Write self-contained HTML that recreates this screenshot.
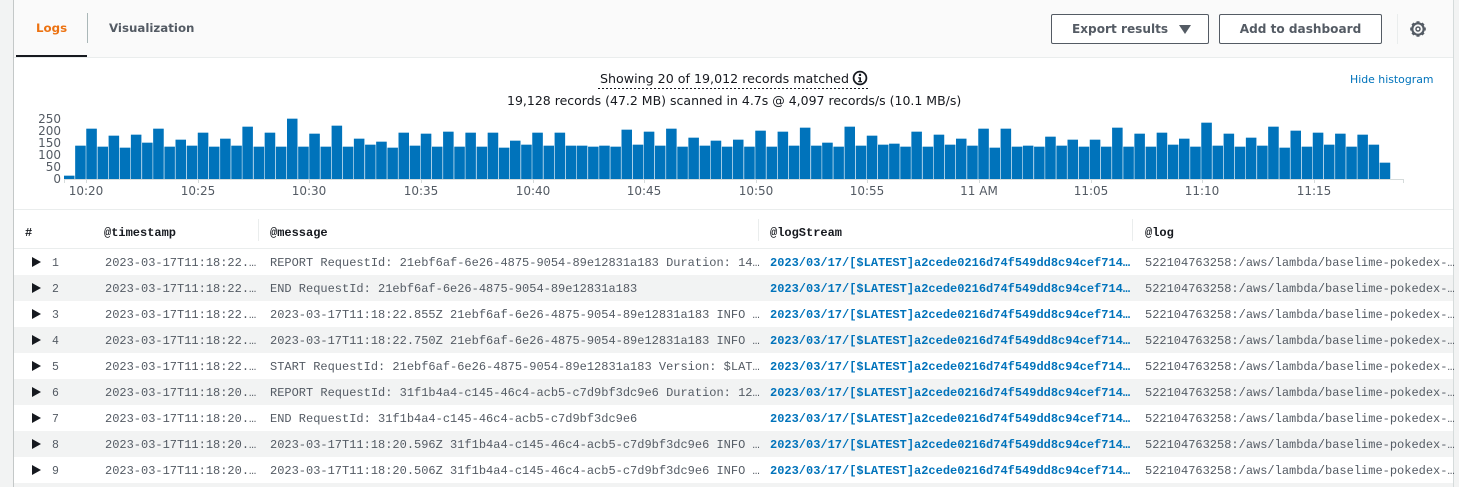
<!DOCTYPE html>
<html><head><meta charset="utf-8"><style>
html,body{margin:0;padding:0;width:1459px;height:487px;overflow:hidden;background:#fff}
body{position:relative;font-family:"DejaVu Sans","Liberation Sans",sans-serif;color:#16191f}
.a{position:absolute;white-space:nowrap}
.btn{position:absolute;top:14px;height:28px;border:1px solid #545b64;border-radius:2px;background:#fff;font-weight:bold;font-size:12.1px;line-height:29px;color:#545b64;text-align:center}
#bars{position:absolute;left:64.3px;top:100px;height:79px;width:13300px;display:flex;align-items:flex-end;transform:scaleX(.1);transform-origin:0 0}
#bars i{display:block;flex:none;width:105px;margin-right:6.5px;background:#0073bb;box-shadow:0 -1px 0 #a9d0e8}
.yl{position:absolute;left:21px;width:40px;text-align:right;font-size:12px;line-height:12px;color:#545b64}
.xl{position:absolute;top:184px;width:60px;text-align:center;font-size:12px;line-height:14px;color:#545b64}
.t{position:absolute;width:1px;height:4px;top:179px;background:#d5dbdb}
.r{position:absolute;left:14px;width:1439px;height:26px;font-family:"Liberation Mono",monospace;font-size:12px;line-height:26px;color:#545b64;white-space:nowrap}
.r.g{background:#f2f3f3}
.r span{position:absolute;top:1px}
.r .n{left:38px;font-size:11.5px;top:2px}.r .ts{left:91px}.r .m{left:256px}
.r .l{left:756px;color:#0073bb;font-weight:bold}.r .o{left:1131px}
.r b{position:absolute;left:18px;top:8px;width:0;height:0;border-left:9px solid #16191f;border-top:5px solid transparent;border-bottom:5px solid transparent}
.h{position:absolute;top:225px;font-family:"Liberation Mono",monospace;font-weight:bold;font-size:12px;line-height:16px;color:#16191f}
.s{position:absolute;top:219px;width:1px;height:22px;background:#eaeded}
</style></head><body>
<div class="a" style="left:0;top:0;width:13px;height:487px;background:#f2f3f3"></div>
<div class="a" style="left:13px;top:0;width:1px;height:487px;background:#c4c8c8"></div>
<div class="a" style="left:1454px;top:0;width:5px;height:487px;background:#f2f3f3"></div>
<div class="a" style="left:1453px;top:0;width:1px;height:487px;background:#d5dbdb"></div>

<div class="a" style="left:14px;top:0;width:1439px;height:57px;background:#fafafa;border-bottom:1px solid #eaeded"></div>
<div class="a" style="left:16px;top:55px;width:71px;height:2px;background:#16191f"></div>
<div class="a" style="left:87px;top:13px;width:1px;height:30px;background:#aab7b8"></div>
<div class="a" style="left:36px;top:20px;font-size:11.8px;font-weight:bold;line-height:16px;color:#ec7211">Logs</div>
<div class="a" style="left:109px;top:20px;font-size:11.8px;font-weight:bold;line-height:16px;color:#545b64">Visualization</div>

<div class="btn" style="left:1051px;width:156px"><span style="position:absolute;left:20px">Export results</span><span style="position:absolute;left:127px;top:10px;width:0;height:0;border-top:9px solid #545b64;border-left:6px solid transparent;border-right:6px solid transparent"></span></div>
<div class="btn" style="left:1219px;width:161px">Add to dashboard</div>
<div class="a" style="left:1397px;top:14px;width:1px;height:30px;background:#eaeded"></div>
<svg class="a" style="left:1409px;top:20px" width="18" height="18" viewBox="0 0 18 18"><circle cx="9" cy="9" r="5.7" fill="none" stroke="#545b64" stroke-width="2.2"/><circle cx="9" cy="9" r="2" fill="none" stroke="#545b64" stroke-width="1.5"/><path d="M9 1.200V3.500M9 14.500v2.300M1.200 9H3.500M14.500 9h2.300M3.500 3.500l1.600 1.600M12.900 12.900l1.600 1.600M3.500 14.500l1.600-1.600M12.900 5.100l1.600-1.600" stroke="#545b64" stroke-width="3" fill="none"/></svg>

<div class="a" style="left:600px;top:70px;font-size:12.65px;line-height:17px;color:#16191f">Showing 20 of 19,012 records matched</div>
<svg class="a" style="left:852px;top:70px" width="16" height="16" viewBox="0 0 16 16"><circle cx="8" cy="8" r="6.400" fill="none" stroke="#16191f" stroke-width="1.800"/><rect x="6.900" y="3.800" width="2.200" height="2.200" fill="#16191f"/><path d="M6.200 7.200h2.800v3.800h1v1.200H6.200V11h1.100V8.400H6.200z" fill="#16191f"/></svg>
<div class="a" style="left:598px;top:88px;width:270px;height:1px;background:repeating-linear-gradient(90deg,#16191f 0 2px,transparent 2px 4px)"></div>
<div class="a" style="left:507px;top:92px;font-size:12.5px;line-height:17px;color:#16191f">19,128 records (47.2 MB) scanned in 4.7s @ 4,097 records/s (10.1 MB/s)</div>
<div class="a" style="left:1350px;top:73px;font-size:10.9px;line-height:14px;color:#0073bb">Hide histogram</div>

<div class="yl" style="top:113px">250</div><div class="yl" style="top:125px">200</div><div class="yl" style="top:137px">150</div><div class="yl" style="top:149px">100</div><div class="yl" style="top:161px">50</div><div class="yl" style="top:173px">0</div>

<div id="bars"><i style="height:3.3px"></i><i style="height:33.3px"></i><i style="height:50.3px"></i><i style="height:32.3px"></i><i style="height:43.3px"></i><i style="height:31.3px"></i><i style="height:44px"></i><i style="height:35.7px"></i><i style="height:49.7px"></i><i style="height:32.3px"></i><i style="height:39.3px"></i><i style="height:33.3px"></i><i style="height:46px"></i><i style="height:32.3px"></i><i style="height:39.7px"></i><i style="height:32.7px"></i><i style="height:52.3px"></i><i style="height:32.3px"></i><i style="height:46px"></i><i style="height:32.3px"></i><i style="height:59.7px"></i><i style="height:32.3px"></i><i style="height:44.7px"></i><i style="height:32.3px"></i><i style="height:53.3px"></i><i style="height:32.3px"></i><i style="height:39.7px"></i><i style="height:33.7px"></i><i style="height:37.3px"></i><i style="height:31px"></i><i style="height:46.3px"></i><i style="height:33.3px"></i><i style="height:44.7px"></i><i style="height:32.3px"></i><i style="height:47px"></i><i style="height:32.3px"></i><i style="height:46.3px"></i><i style="height:32.3px"></i><i style="height:46.3px"></i><i style="height:31px"></i><i style="height:37.7px"></i><i style="height:33.7px"></i><i style="height:46px"></i><i style="height:33.3px"></i><i style="height:45.7px"></i><i style="height:32.7px"></i><i style="height:32.7px"></i><i style="height:32.3px"></i><i style="height:33.3px"></i><i style="height:32.3px"></i><i style="height:49px"></i><i style="height:34.3px"></i><i style="height:47px"></i><i style="height:33px"></i><i style="height:50px"></i><i style="height:32.3px"></i><i style="height:41px"></i><i style="height:32.7px"></i><i style="height:37.7px"></i><i style="height:32.3px"></i><i style="height:39px"></i><i style="height:32.3px"></i><i style="height:48.3px"></i><i style="height:32.3px"></i><i style="height:47px"></i><i style="height:32.7px"></i><i style="height:51px"></i><i style="height:33px"></i><i style="height:36.3px"></i><i style="height:32.3px"></i><i style="height:51.7px"></i><i style="height:33.3px"></i><i style="height:43px"></i><i style="height:33.7px"></i><i style="height:35.3px"></i><i style="height:32.3px"></i><i style="height:47px"></i><i style="height:32.3px"></i><i style="height:44px"></i><i style="height:33.7px"></i><i style="height:40.3px"></i><i style="height:33px"></i><i style="height:50px"></i><i style="height:31px"></i><i style="height:49.7px"></i><i style="height:32.3px"></i><i style="height:32.7px"></i><i style="height:32.3px"></i><i style="height:42.3px"></i><i style="height:33.3px"></i><i style="height:38.7px"></i><i style="height:32.3px"></i><i style="height:38.7px"></i><i style="height:32.3px"></i><i style="height:51px"></i><i style="height:32.3px"></i><i style="height:45px"></i><i style="height:32.3px"></i><i style="height:45.7px"></i><i style="height:33.7px"></i><i style="height:40.3px"></i><i style="height:32.3px"></i><i style="height:55.7px"></i><i style="height:32.7px"></i><i style="height:45.3px"></i><i style="height:32.3px"></i><i style="height:41px"></i><i style="height:32.7px"></i><i style="height:51.7px"></i><i style="height:31.3px"></i><i style="height:48px"></i><i style="height:32.3px"></i><i style="height:45.7px"></i><i style="height:33.7px"></i><i style="height:45px"></i><i style="height:32.3px"></i><i style="height:44.3px"></i><i style="height:33.7px"></i><i style="height:16.3px"></i></div>

<div class="a" style="left:64px;top:179px;width:1340px;height:1px;background:#d5dbdb"></div>
<div class="t" style="left:64px"></div><div class="t" style="left:1403px"></div>
<div class="t" style="left:86px"></div><div class="t" style="left:198px"></div><div class="t" style="left:309px"></div><div class="t" style="left:421px"></div><div class="t" style="left:533px"></div><div class="t" style="left:644px"></div><div class="t" style="left:756px"></div><div class="t" style="left:867px"></div><div class="t" style="left:979px"></div><div class="t" style="left:1091px"></div><div class="t" style="left:1202px"></div><div class="t" style="left:1314px"></div>
<div class="xl" style="left:56px">10:20</div><div class="xl" style="left:168px">10:25</div><div class="xl" style="left:279px">10:30</div><div class="xl" style="left:391px">10:35</div><div class="xl" style="left:503px">10:40</div><div class="xl" style="left:614px">10:45</div><div class="xl" style="left:726px">10:50</div><div class="xl" style="left:837px">10:55</div><div class="xl" style="left:949px">11 AM</div><div class="xl" style="left:1061px">11:05</div><div class="xl" style="left:1172px">11:10</div><div class="xl" style="left:1284px">11:15</div>

<div class="a" style="left:14px;top:209px;width:1439px;height:1px;background:#eaeded"></div>
<div class="a" style="left:14px;top:248px;width:1439px;height:1px;background:#eaeded"></div>
<div class="h" style="left:25px">#</div>
<div class="h" style="left:104px">@timestamp</div><div class="s" style="left:258px"></div>
<div class="h" style="left:270px">@message</div><div class="s" style="left:758px"></div>
<div class="h" style="left:770px">@logStream</div><div class="s" style="left:1132px"></div>
<div class="h" style="left:1145px">@log</div>

<div class="r" style="top:249px"><b></b><span class="n">1</span><span class="ts">2023-03-17T11:18:22.…</span><span class="m">REPORT RequestId: 21ebf6af-6e26-4875-9054-89e12831a183 Duration: 14…</span><span class="l">2023/03/17/[$LATEST]a2cede0216d74f549dd8c94cef714…</span><span class="o">522104763258:/aws/lambda/baselime-pokedex-…</span></div>
<div class="r g" style="top:275px"><b></b><span class="n">2</span><span class="ts">2023-03-17T11:18:22.…</span><span class="m">END RequestId: 21ebf6af-6e26-4875-9054-89e12831a183</span><span class="l">2023/03/17/[$LATEST]a2cede0216d74f549dd8c94cef714…</span><span class="o">522104763258:/aws/lambda/baselime-pokedex-…</span></div>
<div class="r" style="top:301px"><b></b><span class="n">3</span><span class="ts">2023-03-17T11:18:22.…</span><span class="m">2023-03-17T11:18:22.855Z 21ebf6af-6e26-4875-9054-89e12831a183 INFO …</span><span class="l">2023/03/17/[$LATEST]a2cede0216d74f549dd8c94cef714…</span><span class="o">522104763258:/aws/lambda/baselime-pokedex-…</span></div>
<div class="r g" style="top:327px"><b></b><span class="n">4</span><span class="ts">2023-03-17T11:18:22.…</span><span class="m">2023-03-17T11:18:22.750Z 21ebf6af-6e26-4875-9054-89e12831a183 INFO …</span><span class="l">2023/03/17/[$LATEST]a2cede0216d74f549dd8c94cef714…</span><span class="o">522104763258:/aws/lambda/baselime-pokedex-…</span></div>
<div class="r" style="top:353px"><b></b><span class="n">5</span><span class="ts">2023-03-17T11:18:22.…</span><span class="m">START RequestId: 21ebf6af-6e26-4875-9054-89e12831a183 Version: $LAT…</span><span class="l">2023/03/17/[$LATEST]a2cede0216d74f549dd8c94cef714…</span><span class="o">522104763258:/aws/lambda/baselime-pokedex-…</span></div>
<div class="r g" style="top:379px"><b></b><span class="n">6</span><span class="ts">2023-03-17T11:18:20.…</span><span class="m">REPORT RequestId: 31f1b4a4-c145-46c4-acb5-c7d9bf3dc9e6 Duration: 12…</span><span class="l">2023/03/17/[$LATEST]a2cede0216d74f549dd8c94cef714…</span><span class="o">522104763258:/aws/lambda/baselime-pokedex-…</span></div>
<div class="r" style="top:405px"><b></b><span class="n">7</span><span class="ts">2023-03-17T11:18:20.…</span><span class="m">END RequestId: 31f1b4a4-c145-46c4-acb5-c7d9bf3dc9e6</span><span class="l">2023/03/17/[$LATEST]a2cede0216d74f549dd8c94cef714…</span><span class="o">522104763258:/aws/lambda/baselime-pokedex-…</span></div>
<div class="r g" style="top:431px"><b></b><span class="n">8</span><span class="ts">2023-03-17T11:18:20.…</span><span class="m">2023-03-17T11:18:20.596Z 31f1b4a4-c145-46c4-acb5-c7d9bf3dc9e6 INFO …</span><span class="l">2023/03/17/[$LATEST]a2cede0216d74f549dd8c94cef714…</span><span class="o">522104763258:/aws/lambda/baselime-pokedex-…</span></div>
<div class="r" style="top:457px"><b></b><span class="n">9</span><span class="ts">2023-03-17T11:18:20.…</span><span class="m">2023-03-17T11:18:20.506Z 31f1b4a4-c145-46c4-acb5-c7d9bf3dc9e6 INFO …</span><span class="l">2023/03/17/[$LATEST]a2cede0216d74f549dd8c94cef714…</span><span class="o">522104763258:/aws/lambda/baselime-pokedex-…</span></div>
<div class="r g" style="top:483px;height:4px"></div>
</body></html>
